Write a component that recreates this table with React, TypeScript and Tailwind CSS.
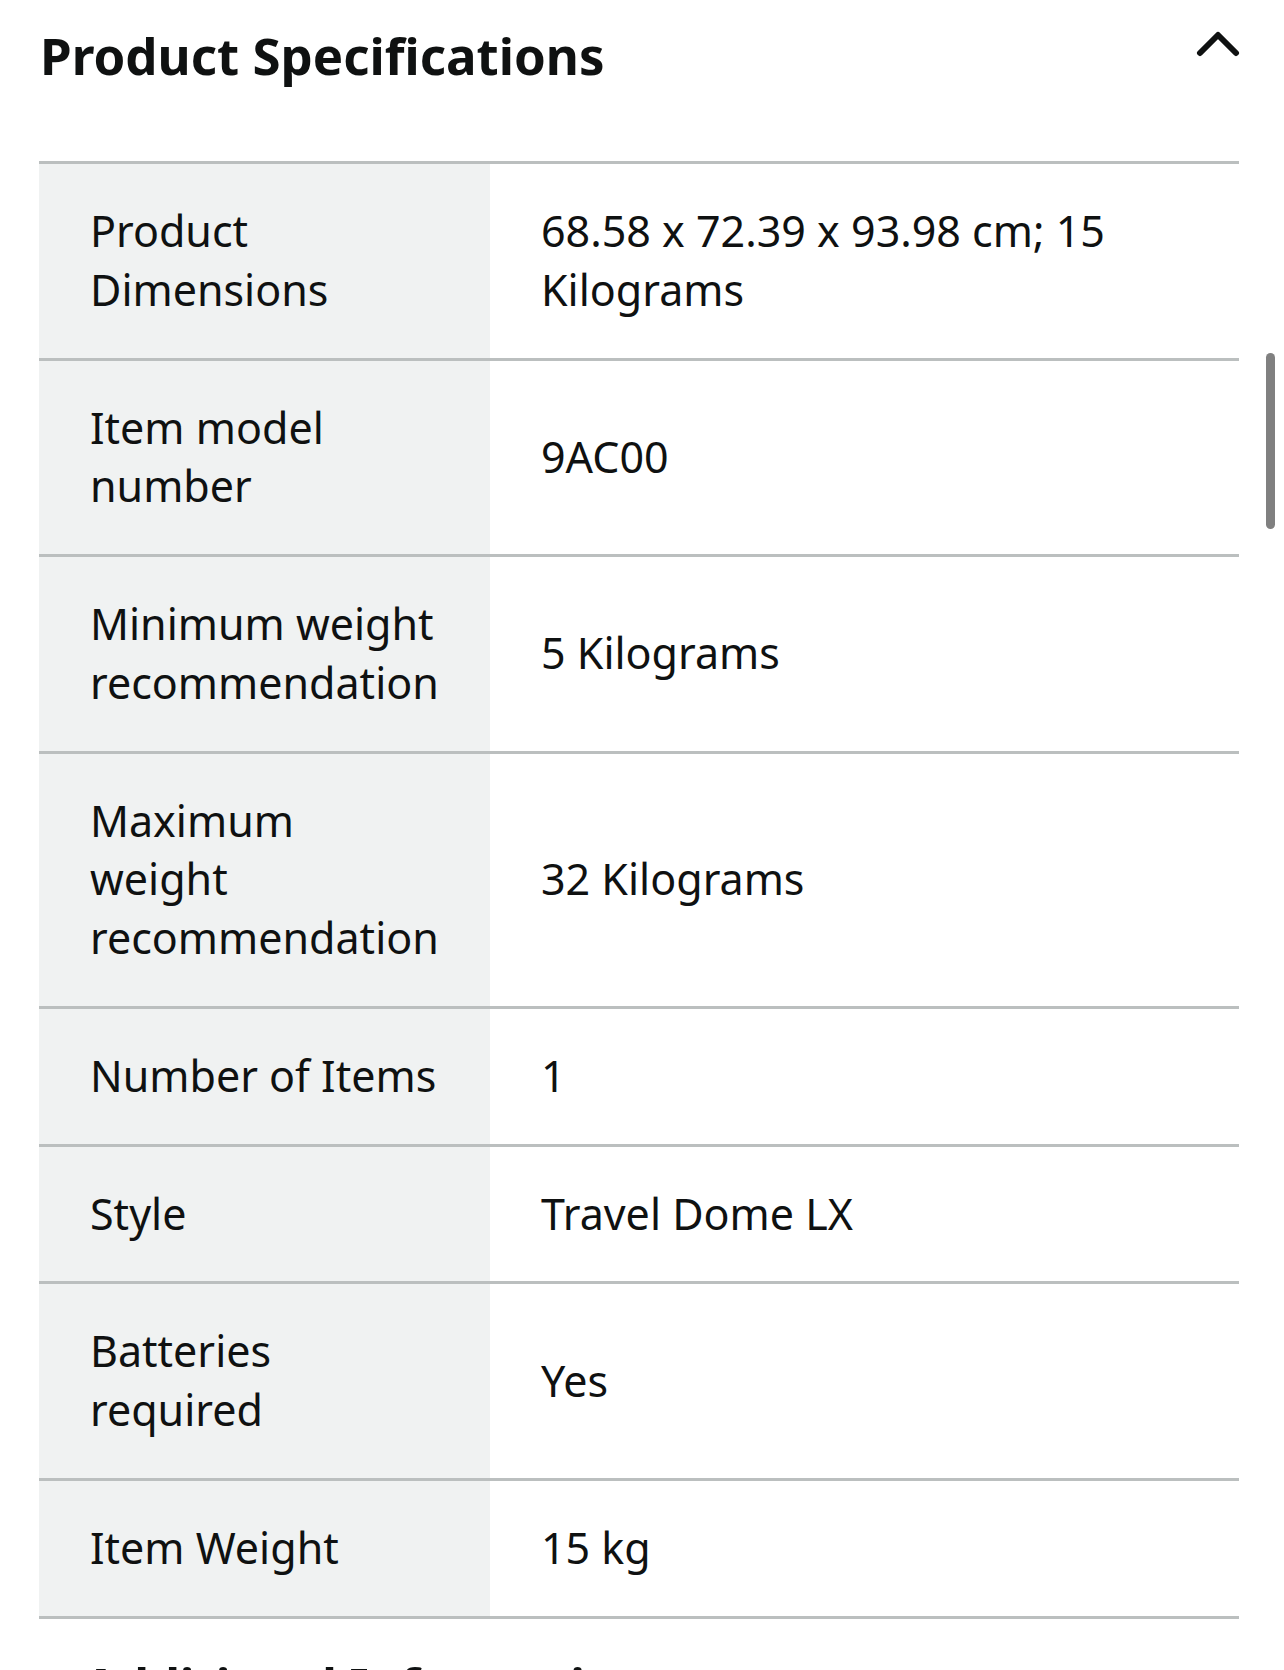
const specs = [
  { label: ["Product", "Dimensions"], value: ["68.58 x 72.39 x 93.98 cm; 15", "Kilograms"] },
  { label: ["Item model", "number"], value: ["9AC00"] },
  { label: ["Minimum weight", "recommendation"], value: ["5 Kilograms"] },
  { label: ["Maximum", "weight", "recommendation"], value: ["32 Kilograms"] },
  { label: ["Number of Items"], value: ["1"] },
  { label: ["Style"], value: ["Travel Dome LX"] },
  { label: ["Batteries", "required"], value: ["Yes"] },
  { label: ["Item Weight"], value: ["15 kg"] },
];

function ChevronUp() {
  return (
    <svg width="44" height="28" viewBox="0 0 44 28" fill="none">
      <path d="M4 23 L22 5 L40 23" stroke="#0f1111" strokeWidth="6" strokeLinecap="round" strokeLinejoin="round" />
    </svg>
  );
}

export default function App() {
  return (
    <div className="relative min-h-[1670px] w-full overflow-hidden bg-white text-[#0f1111] font-['Noto_Sans',sans-serif]">
      {/* header */}
      <div className="flex h-[161px] items-start justify-between pl-[40px] pr-[44px]">
        <h2 className="pt-[23px] text-[51px] font-bold leading-[64px]">Product Specifications</h2>
        <div className="pt-[30px]">
          <ChevronUp />
        </div>
      </div>

      {/* spec table */}
      <div className="ml-[39px] mr-[45px] border-b-[3px] border-[#bbbfbf]">
        {specs.map((row, i) => (
          <div key={i} className="grid grid-cols-[451px_1fr] border-t-[3px] border-[#bbbfbf]">
            <div className="flex flex-col justify-center bg-[#f0f2f2] py-[38px] pl-[51px] pr-4 text-[43px] leading-[58.75px]">
              {row.label.map((line, j) => (
                <span key={j} className="whitespace-nowrap">{line}</span>
              ))}
            </div>
            <div className="flex flex-col justify-center py-[38px] pl-[51px] pr-6 text-[43px] leading-[58.75px]">
              {row.value.map((line, j) => (
                <span key={j} className="whitespace-nowrap">{line}</span>
              ))}
            </div>
          </div>
        ))}
      </div>

      {/* next section, cut off by the viewport */}
      <div className="pl-[84px] pt-[34px] text-[49px] font-bold leading-[64px]">Additional Information</div>

      {/* scrollbar thumb */}
      <div className="absolute left-[1266px] top-[353px] h-[176px] w-[9px] rounded-full bg-[#808080]" />
    </div>
  );
}
